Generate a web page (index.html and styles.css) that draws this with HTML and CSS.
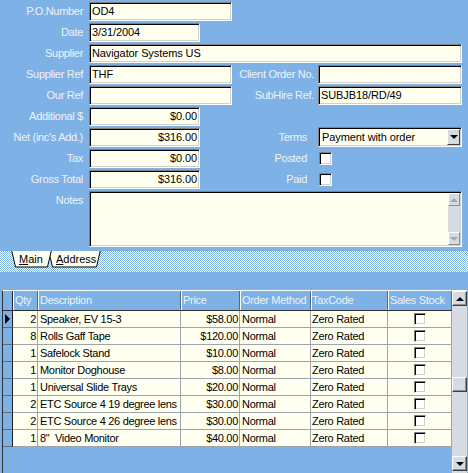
FILE: index.html
```html
<!DOCTYPE html>
<html>
<head>
<meta charset="utf-8">
<link rel="stylesheet" href="styles.css">
</head>
<body>
<div class="app">
  <div class="form">
    <div class="lbl">P.O.Number</div><div class="fld f2">OD4</div>
    <div class="lbl">Date</div><div class="fld f2 w111">3/31/2004</div>
    <div class="lbl">Supplier</div><div class="fld span">Navigator Systems US</div>
    <div class="lbl">Supplier Ref</div><div class="fld f2">THF</div>
    <div class="lbl-r">Client Order No.</div><div class="fld f4"></div>
    <div class="lbl">Our Ref</div><div class="fld f2"></div>
    <div class="lbl-r">SubHire Ref.</div><div class="fld f4">SUBJB18/RD/49</div>
    <div class="lbl">Additional $</div><div class="fld f2 w111 num">$0.00</div>
    <div class="lbl">Net (inc's Add.)</div><div class="fld f2 w111 num">$316.00</div>
    <div class="lbl-r narrow">Terms</div>
    <div class="fld f4 combo"><span>Payment with order</span><span class="dd"><i class="tri-down"></i></span></div>
    <div class="lbl">Tax</div><div class="fld f2 w111 num">$0.00</div>
    <div class="lbl-r narrow">Posted</div><div class="f4 chkwrap"><span class="chk"></span></div>
    <div class="lbl">Gross Total</div><div class="fld f2 w111 num">$316.00</div>
    <div class="lbl-r narrow">Paid</div><div class="f4 chkwrap"><span class="chk"></span></div>
    <div class="lbl top">Notes</div>
    <div class="fld span notes"><div class="ns"><span class="nbtn"><i class="tri-up gray"></i></span><span class="nbtn"><i class="tri-down gray"></i></span></div></div>
  </div>

  <div class="tabs">
    <div class="tab main">
      <svg width="41" height="17" viewBox="0 0 41 17"><polygon points="0,0 41,0 37,16 4,16" fill="#fffff0"/><polyline points="0.5,-1 4.5,16 36.5,16 40.5,-1" fill="none" stroke="#000" stroke-width="1"/></svg>
      <u>M</u>ain
    </div>
    <div class="tab addr">
      <svg width="53" height="17" viewBox="0 0 53 17"><polygon points="0,0 53,0 49,16 4,16" fill="#fffff0"/><polyline points="0.5,-1 4.5,16 48.5,16 52.5,-1" fill="none" stroke="#000" stroke-width="1"/></svg>
      <u>A</u>ddress
    </div>
  </div>

  <div class="dgrid">
    <div class="table">
      <div class="row hdr">
        <div class="cell sel"></div>
        <div class="cell">Qty</div>
        <div class="cell">Description</div>
        <div class="cell">Price</div>
        <div class="cell">Order Method</div>
        <div class="cell tx">TaxCode</div>
        <div class="cell">Sales Stock</div>
      </div>
      <div class="row">
        <div class="cell sel"><i class="tri-right"></i></div>
        <div class="cell r">2</div><div class="cell">Speaker, EV 15-3</div><div class="cell r">$58.00</div>
        <div class="cell">Normal</div><div class="cell tx">Zero Rated</div><div class="cell c"><span class="chk sm"></span></div>
      </div>
      <div class="row">
        <div class="cell sel"></div>
        <div class="cell r">8</div><div class="cell">Rolls Gaff Tape</div><div class="cell r">$120.00</div>
        <div class="cell">Normal</div><div class="cell tx">Zero Rated</div><div class="cell c"><span class="chk sm"></span></div>
      </div>
      <div class="row">
        <div class="cell sel"></div>
        <div class="cell r">1</div><div class="cell">Safelock Stand</div><div class="cell r">$10.00</div>
        <div class="cell">Normal</div><div class="cell tx">Zero Rated</div><div class="cell c"><span class="chk sm"></span></div>
      </div>
      <div class="row">
        <div class="cell sel"></div>
        <div class="cell r">1</div><div class="cell">Monitor Doghouse</div><div class="cell r">$8.00</div>
        <div class="cell">Normal</div><div class="cell tx">Zero Rated</div><div class="cell c"><span class="chk sm"></span></div>
      </div>
      <div class="row">
        <div class="cell sel"></div>
        <div class="cell r">1</div><div class="cell">Universal Slide Trays</div><div class="cell r">$20.00</div>
        <div class="cell">Normal</div><div class="cell tx">Zero Rated</div><div class="cell c"><span class="chk sm"></span></div>
      </div>
      <div class="row">
        <div class="cell sel"></div>
        <div class="cell r">2</div><div class="cell">ETC Source 4 19 degree lens</div><div class="cell r">$30.00</div>
        <div class="cell">Normal</div><div class="cell tx">Zero Rated</div><div class="cell c"><span class="chk sm"></span></div>
      </div>
      <div class="row">
        <div class="cell sel"></div>
        <div class="cell r">2</div><div class="cell">ETC Source 4 26 degree lens</div><div class="cell r">$30.00</div>
        <div class="cell">Normal</div><div class="cell tx">Zero Rated</div><div class="cell c"><span class="chk sm"></span></div>
      </div>
      <div class="row">
        <div class="cell sel"></div>
        <div class="cell r">1</div><div class="cell">8"&nbsp; Video Monitor</div><div class="cell r">$40.00</div>
        <div class="cell">Normal</div><div class="cell tx">Zero Rated</div><div class="cell c"><span class="chk sm"></span></div>
      </div>
      <div class="filler"></div>
    </div>
    <div class="vs">
      <span class="sbtn"><i class="tri-up"></i></span>
      <div class="track"><span class="thumb"></span></div>
      <span class="sbtn"><i class="tri-down"></i></span>
    </div>
  </div>
</div>
</body>
</html>
```
FILE: styles.css
```css
* { box-sizing: border-box; }
html, body { margin: 0; padding: 0; }
body {
  width: 468px;
  height: 473px;
  overflow: hidden;
  background: #7eb1e6;
  font-family: "Liberation Sans", Arial, sans-serif;
  font-size: 11px;
  color: #000;
}
.app { display: flex; flex-direction: column; height: 473px; }

.form {
  display: grid;
  grid-template-columns: 89px 143px 86px 144px;
  grid-template-rows: repeat(9, 19px) 56px;
  row-gap: 2px;
  padding-top: 2px;
}
.lbl, .lbl-r {
  color: #eef3f8;
  text-align: right;
  line-height: 19px;
  white-space: nowrap;
  letter-spacing: -0.3px;
}
.lbl { grid-column: 1; padding-right: 6px; }
.lbl-r { grid-column: 3; padding-right: 4px; }
.lbl-r.narrow { padding-right: 11px; }
.lbl.top { align-self: start; }

.fld {
  background: #fffff0;
  border: 1px solid;
  border-color: #808080 #ffffff #ffffff #808080;
  box-shadow: inset 1px 1px 0 #000, inset -1px -1px 0 #d4d0c8;
  height: 19px;
  padding: 0 2px;
  line-height: 17px;
  white-space: nowrap;
  overflow: hidden;
  letter-spacing: -0.1px;
}
.f2 { grid-column: 2; }
.f4 { grid-column: 4; }
.span { grid-column: 2 / 5; }
.w111 { width: 111px; }
.num { text-align: right; padding-right: 2px; }

.combo {
  display: flex;
  align-items: center;
  height: 20px;
  margin-top: -1px;
  padding: 1px 1px 1px 3px;
}
.dd {
  margin-left: auto;
  width: 13px;
  height: 16px;
  background: #d6dae2;
  border: 1px solid;
  border-color: #ffffff #404040 #404040 #ffffff;
  display: flex;
  align-items: center;
  justify-content: center;
}

.chkwrap { display: flex; align-items: center; padding-left: 1px; }
.chk {
  display: inline-block;
  width: 13px;
  height: 13px;
  background: #fff;
  border: 1px solid;
  border-color: #808080 #ffffff #ffffff #808080;
  box-shadow: inset 1px 1px 0 #000, inset -1px -1px 0 #d4d0c8;
}
.chk.sm { width: 12px; height: 12px; vertical-align: middle; }

.notes {
  height: 56px;
  padding: 1px 1px 1px 2px;
  display: flex;
}
.ns {
  margin-left: auto;
  width: 12px;
  height: 100%;
  background: #d6dae2;
  display: flex;
  flex-direction: column;
  justify-content: space-between;
}
.nbtn {
  width: 12px;
  height: 13px;
  background: #d6dae2;
  border: 1px solid;
  border-color: #ffffff #8a8e96 #8a8e96 #ffffff;
  display: flex;
  align-items: center;
  justify-content: center;
}

.tri-down, .tri-up, .tri-right { display: block; width: 0; height: 0; }
.tri-down { border-left: 4px solid transparent; border-right: 4px solid transparent; border-top: 4px solid #000; }
.tri-up { border-left: 4px solid transparent; border-right: 4px solid transparent; border-bottom: 4px solid #000; }
.tri-down.gray { border-top-color: #a2a6ae; }
.tri-up.gray { border-bottom-color: #a2a6ae; }
.tri-right { border-top: 5px solid transparent; border-bottom: 5px solid transparent; border-left: 5px solid #000; margin-left: 2px; }

.tabs {
  margin-top: 4px;
  height: 21px;
  display: flex;
  padding-left: 11px;
  background: repeating-conic-gradient(#7eb1e6 0 25%, #ffffff 0 50%) 0 0 / 2px 2px;
}
.tab {
  position: relative;
  height: 17px;
  line-height: 16px;
  padding-left: 8px;
  white-space: nowrap;
}
.tab svg { position: absolute; left: 0; top: 0; z-index: -1; }
.tab.main { width: 41px; z-index: 2; }
.tab.addr { width: 53px; margin-left: -4px; z-index: 1; }

.dgrid {
  margin: 18px 1px 0 2px;
  height: 183px;
  display: flex;
  border-left: 1px solid #303030;
  border-top: 1px solid #ffffff;
}
.table { width: 449px; display: flex; flex-direction: column; }
.row {
  display: grid;
  grid-template-columns: 10px 25px 143px 59px 71px 77px 64px;
  height: 17px;
}
.cell {
  background: #fffff0;
  border-right: 1px solid #9ea4ae;
  border-bottom: 1px solid #9ea4ae;
  padding: 0 2px;
  line-height: 16px;
  white-space: nowrap;
  overflow: hidden;
  letter-spacing: -0.3px;
}
.cell.r { text-align: right; padding-right: 1px; }
.cell.c { display: flex; align-items: center; justify-content: center; }
.cell.tx { padding-left: 1px; }
.cell.sel {
  background: #7eb1e6;
  border-right: 1px solid #202020;
  border-bottom: 1px solid #5c6878;
  padding: 0;
  display: flex;
  align-items: center;
}
.row.hdr { height: 20px; }
.hdr .cell {
  background: #7eb1e6;
  color: #eef3f8;
  line-height: 19px;
  border-right: 1px solid #5c6878;
  border-bottom: 1px solid #303030;
  box-shadow: inset 1px 0 0 #ffffff;
}
.hdr .cell.sel { box-shadow: none; border-right: 1px solid #202020; }
.filler { flex: 1; background: #7eb1e6; }

.vs {
  width: 15px;
  background: #d6dae2;
  display: flex;
  flex-direction: column;
  padding-bottom: 2px;
}
.sbtn {
  width: 15px;
  height: 15px;
  background: #d6dae2;
  border: 1px solid;
  border-color: #ffffff #404040 #404040 #ffffff;
  box-shadow: inset -1px -1px 0 #8a8e96;
  display: flex;
  align-items: center;
  justify-content: center;
  flex: none;
}
.track { flex: 1; }
.thumb {
  display: block;
  margin-top: 71px;
  width: 15px;
  height: 15px;
  background: #d6dae2;
  border: 1px solid;
  border-color: #ffffff #404040 #404040 #ffffff;
  box-shadow: inset -1px -1px 0 #8a8e96;
}
```
